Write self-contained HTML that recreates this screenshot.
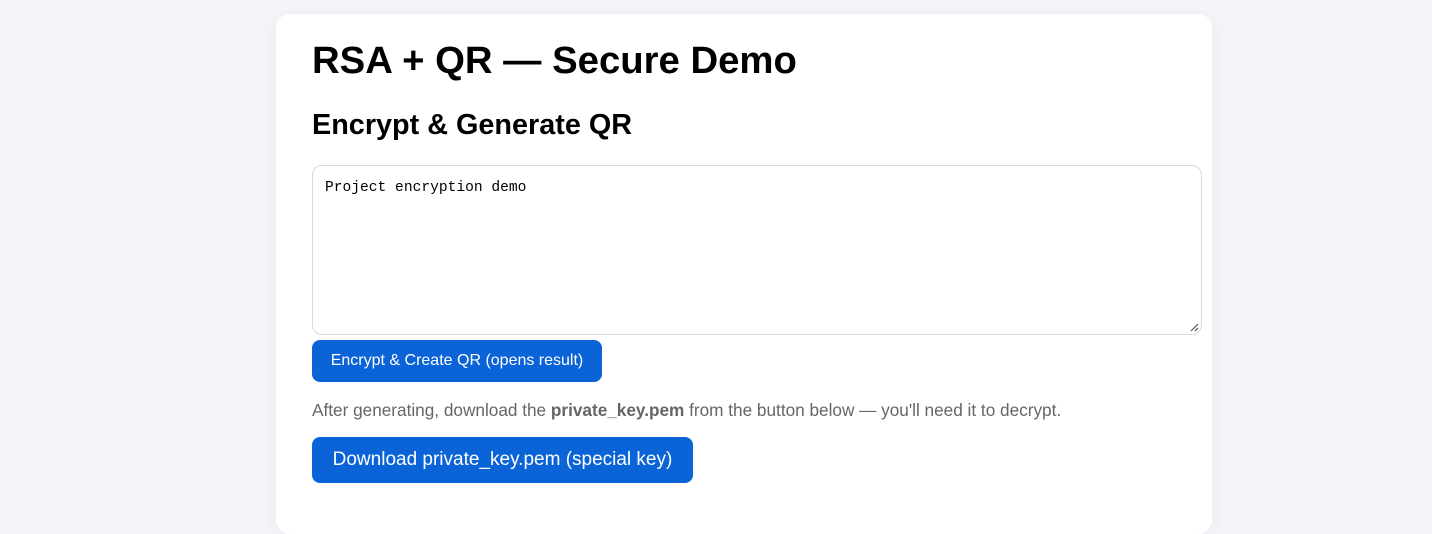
<!DOCTYPE html>
<html><head><meta charset="utf-8"><style>
html,body{margin:0;padding:0;background:#f4f5f9;width:1432px;height:492px;overflow:hidden;font-family:"Liberation Sans",Arial,sans-serif}
.card{position:absolute;left:276px;top:14px;width:936px;height:520px;background:#fff;border-radius:14px;box-shadow:0 4px 20px rgba(0,0,0,0.05)}
h1{position:absolute;left:36px;top:25px;margin:0;font-size:38.3px;font-weight:bold;color:#000;line-height:44px}
h2{position:absolute;left:36px;top:94px;margin:0;font-size:28.8px;font-weight:bold;color:#000;line-height:34px}
.ta{position:absolute;left:36px;top:151px;width:888px;height:168px;border:1px solid #d9d9d9;border-radius:10px;box-sizing:content-box}
.ta span{position:absolute;left:12px;top:14px;font-family:"Liberation Mono",monospace;font-size:14.6px;color:#000}
.rz{position:absolute;right:2px;bottom:2px}
.btn{position:absolute;left:36px;background:#0b63d8;color:#fff;border-radius:8px;text-align:center}
.b1{top:326px;width:290px;height:42px;line-height:42px;font-size:16px}
.b2{top:423px;width:381px;height:46px;line-height:46px;font-size:19px}
p{position:absolute;left:36px;top:386px;margin:0;font-size:17.2px;color:#666;white-space:nowrap}
</style></head><body>
<div class="card">
<h1>RSA + QR — Secure Demo</h1>
<h2>Encrypt &amp; Generate QR</h2>
<div class="ta"><span>Project encryption demo</span>
<svg class="rz" width="10" height="10"><path d="M9 2L2 9M9 6L6 9" stroke="#555" stroke-width="1.2"/></svg></div>
<div class="btn b1">Encrypt &amp; Create QR (opens result)</div>
<p>After generating, download the <b>private_key.pem</b> from the button below — you'll need it to decrypt.</p>
<div class="btn b2">Download private_key.pem (special key)</div>
</div>
</body></html>
